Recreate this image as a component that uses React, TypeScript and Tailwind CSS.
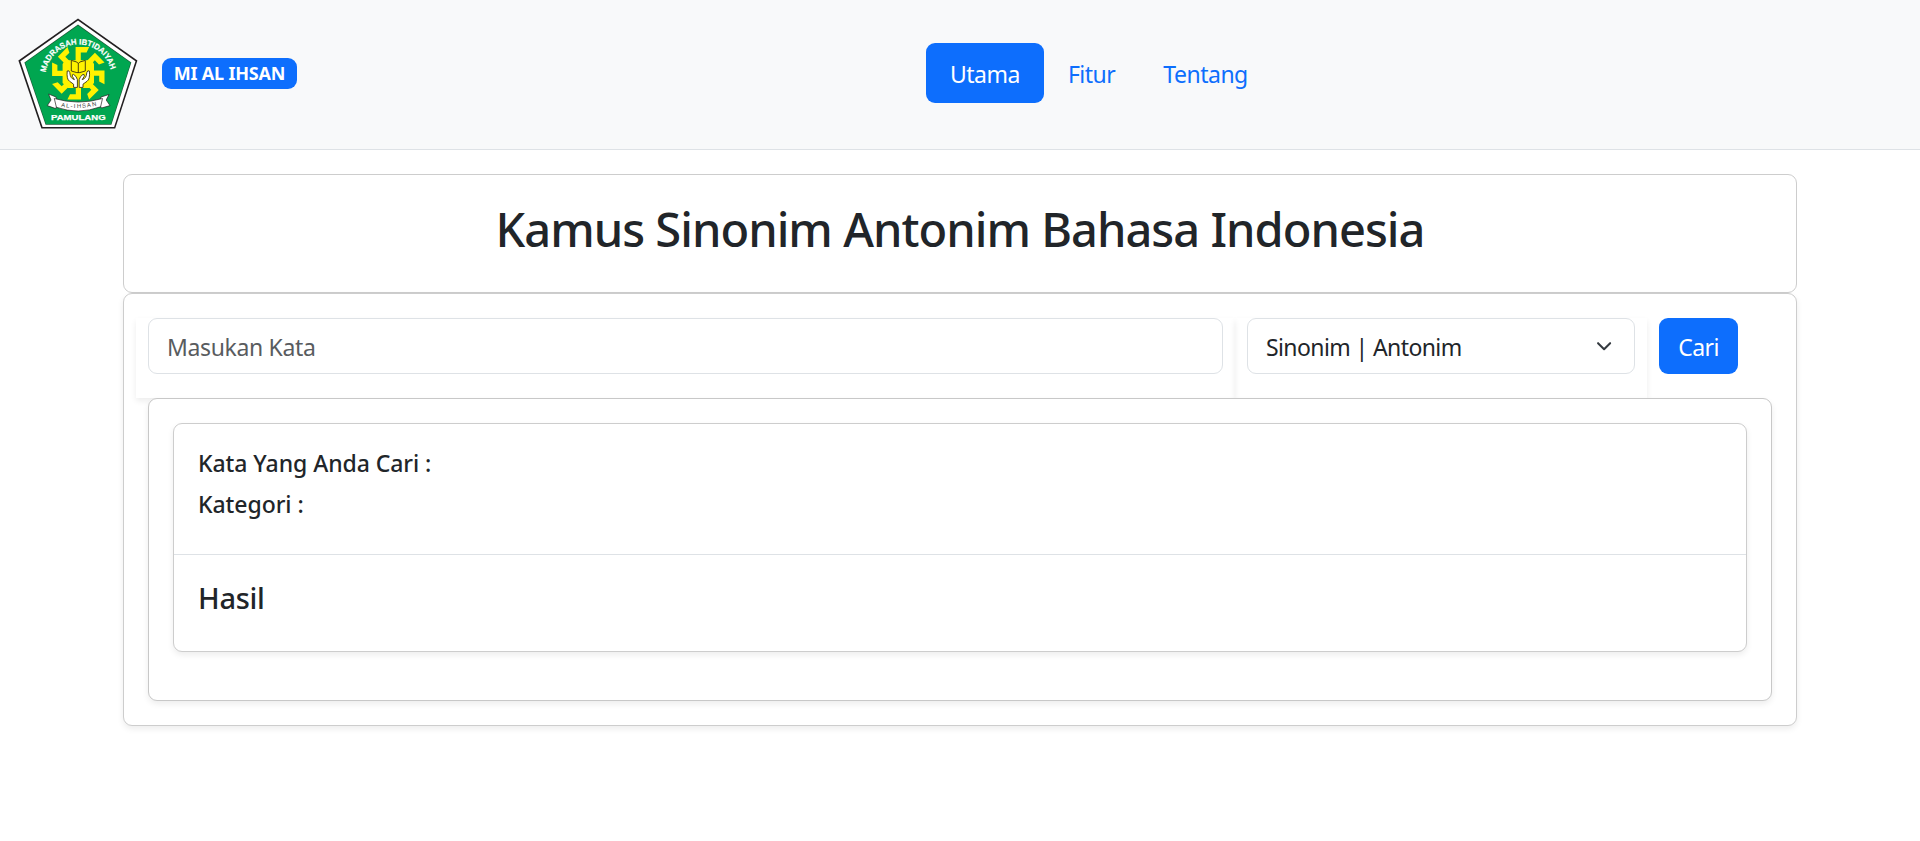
import type { ReactNode } from "react";

const armAngles = [0, 45, 90, 135, 180, 225, 270, 315];

function Logo() {
  return (
    <svg className="size-[120px] shrink-0" viewBox="18 14 120 120" role="img" aria-label="Logo">
      <defs>
        <path id="crest-arc" d="M45.7 72.5 A33.2 33.2 0 0 1 111.3 72.5" />
        <path id="ribbon-arc" d="M61 106.8 Q78.3 110 97.5 105.4" />
      </defs>
      <path d="M78 18.6 L137.4 60.6 L115.2 128.5 H41.4 L18.4 60.6 Z" fill="#221f20" />
      <path d="M78 20.5 L135.5 61.2 L114.1 126.9 H42.6 L20.4 61.2 Z" fill="#fff" />
      <path d="M78 24.6 L131.3 62.4 L111.4 124.8 H45.6 L24.4 62.4 Z" fill="#1c5c38" />
      <path d="M78 25.4 L130.6 62.7 L111 124.1 H46 L25.2 62.7 Z" fill="#00a650" />
      <g fill="#fff200">
        {armAngles.map((angle) => (
          <path key={angle} d="M75.6 62 V47.1 H89.2 L86.6 52.4 H80.8 V62 Z" transform={`rotate(${angle} 78.3 73.3)`} />
        ))}
      </g>
      <path d="M65 60.2 H92 L94 64 V83 L89 88 H68 L62.6 83 V64 Z" fill="#fff200" />
      <g stroke="#3a3210" strokeWidth="0.9" strokeLinejoin="round">
        <path d="M71.3 60.4 L76.8 62 L78.3 63.6 L79.8 62 L85.3 60.4 V71 L79.8 72.6 H76.8 L71.3 71 Z" fill="#fff200" />
        <path d="M78.3 63.4 V72.6" fill="none" />
        <path
          d="M67.2 71 Q66.4 79.4 69.6 81.3 L73.6 84.2 V87.4 H77.4 V79.6 Q76.4 76 73.6 74.4 Q71.6 74.2 72.4 76.4 L74.4 79.6 Q70.2 78.6 69.8 72.6 Q69 69.8 67.2 71 Z"
          fill="#fff"
        />
        <path
          d="M89.4 71 Q90.2 79.4 87 81.3 L83 84.2 V87.4 H79.2 V79.6 Q80.2 76 83 74.4 Q85 74.2 84.2 76.4 L82.2 79.6 Q86.4 78.6 86.8 72.6 Q87.6 69.8 89.4 71 Z"
          fill="#fff"
        />
      </g>
      <g fill="#fff" stroke="#221f20" strokeWidth="0.7" strokeLinejoin="round">
        <path d="M56 97 L48.6 94 L51 100 L47.3 105.6 L55.6 108.6 L58 104 Z" />
        <path d="M101 97 L109 94.5 L106.2 100 L110 105.6 L101.5 108 L99 104 Z" />
        <path d="M54.3 98.5 Q78.3 105.6 102.5 98.5 L100.6 106.8 Q78.3 115 56.4 107.3 Z" />
      </g>
      <text className="font-['Liberation_Sans'] font-bold" fontSize="8" fill="#fff" stroke="#fff" strokeWidth="0.2">
        <textPath href="#crest-arc" textLength="91" lengthAdjust="spacingAndGlyphs">
          MADRASAH IBTIDAIYAH
        </textPath>
      </text>
      <text className="font-['Liberation_Sans']" fontSize="5.8" fill="#333">
        <textPath href="#ribbon-arc" textLength="36" lengthAdjust="spacing">
          AL-IHSAN
        </textPath>
      </text>
      <text
        x="51"
        y="120.2"
        className="font-['Liberation_Sans'] font-bold"
        fontSize="8"
        fill="#fff"
        stroke="#fff"
        strokeWidth="0.25"
        textLength="54.6"
        lengthAdjust="spacingAndGlyphs"
      >
        PAMULANG
      </text>
    </svg>
  );
}

function NavLink({ active, children }: { active?: boolean; children: ReactNode }) {
  return (
    <a
      href="#"
      className={
        active
          ? "flex h-[60px] items-center rounded-[9px] bg-[#0d6efd] px-6 pt-[2px] text-white"
          : "flex h-[60px] items-center rounded-[9px] px-6 pt-[2px] text-[#0d6efd]"
      }
    >
      {children}
    </a>
  );
}

const shadow = "shadow-[0_3px_6px_rgba(0,0,0,0.075)]";

export default function App() {
  return (
    <div className="min-h-[841px] bg-white font-['Noto_Sans',sans-serif] text-[23px] leading-[36px] text-[#212529]">
      <header className="flex h-[150px] items-start border-b border-[#dee2e6] bg-[#f8f9fa] pt-[14px] pl-[18px]">
        <Logo />
        <span className="mt-[44px] ml-6 flex h-[31px] w-[135px] items-center justify-center rounded-[9px] bg-[#0d6efd] pb-[2px] text-[18px] leading-[18px] font-bold tracking-[-0.2px] text-white">
          MI AL IHSAN
        </span>
        <nav className="mt-[29px] ml-[629px] flex tracking-[-0.5px]">
          <NavLink active>Utama</NavLink>
          <NavLink>Fitur</NavLink>
          <NavLink>Tentang</NavLink>
        </nav>
      </header>

      <main className="mx-auto mt-6 w-[1674px]">
        <section className="h-[119px] rounded-[9px] border border-[#cdcdcd] bg-white pt-[25px] text-center">
          <h1 className="text-[47px] leading-[58px] font-medium tracking-[-0.97px]">
            Kamus Sinonim Antonim Bahasa Indonesia
          </h1>
        </section>

        <section className={`h-[433px] rounded-[9px] border border-[#cdcdcd] bg-white pt-6 ${shadow}`}>
          <form className="flex pl-3" onSubmit={(e) => e.preventDefault()}>
            <div className={`h-20 w-[1099px] px-3 ${shadow}`}>
              <input
                type="text"
                placeholder="Masukan Kata"
                className="block h-14 w-full rounded-[9px] border border-[#dee2e6] bg-white px-[18px] pt-[2px] tracking-[-0.35px] outline-none placeholder:text-[#595c5f]"
              />
            </div>
            <div className={`h-20 w-[412px] px-3 ${shadow}`}>
              <button
                type="button"
                className="flex h-14 w-full items-center justify-between rounded-[9px] border border-[#dee2e6] bg-white px-[18px] pt-[2px] tracking-[-0.6px]"
              >
                Sinonim | Antonim
                <svg className="size-6" viewBox="0 0 16 16" fill="none" stroke="#343a40" strokeWidth="2">
                  <path d="m2 5 6 6 6-6" strokeLinecap="round" strokeLinejoin="round" transform="translate(2.7 2.1) scale(0.67)" />
                </svg>
              </button>
            </div>
            <div className="px-3">
              <button type="submit" className="h-14 w-[79px] rounded-[9px] bg-[#0d6efd] pt-[2px] tracking-[-0.6px] text-white">
                Cari
              </button>
            </div>
          </form>

          <div className={`relative mx-6 h-[303px] rounded-[9px] border border-[#c8c8c8] bg-white p-6 ${shadow}`}>
            <div className={`h-[229px] rounded-[9px] border border-[#cdcdcd] bg-white ${shadow}`}>
              <div className="h-[131px] border-b border-[#dee2e6] px-6 pt-[21px] font-medium tracking-[-0.06px]">
                <p>Kata Yang Anda Cari :</p>
                <p className="mt-[5px]">Kategori :</p>
              </div>
              <h2 className="px-6 pt-[25px] text-[29px] leading-[36px] font-medium tracking-[-0.3px]">Hasil</h2>
            </div>
          </div>
        </section>
      </main>
    </div>
  );
}
